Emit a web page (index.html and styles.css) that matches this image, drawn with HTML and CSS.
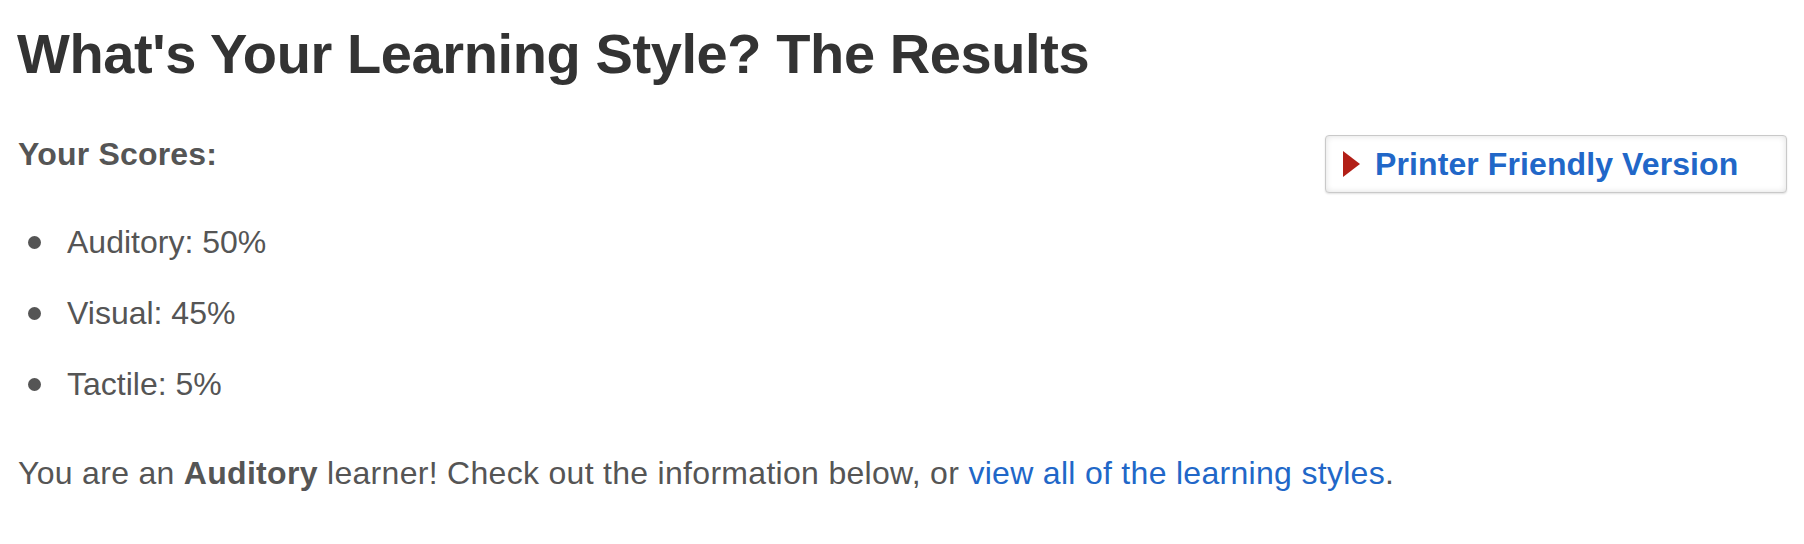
FILE: index.html
```html
<!DOCTYPE html>
<html lang="en">
<head>
<meta charset="utf-8">
<title>What's Your Learning Style? The Results</title>
<link rel="stylesheet" href="styles.css">
</head>
<body>
<div class="page">
  <h1 class="title">What's Your Learning Style? The Results</h1>
  <div class="scores-row">
    <div class="scores">
      <h2 class="scores-heading">Your Scores:</h2>
      <ul class="score-list">
        <li>Auditory: 50%</li>
        <li>Visual: 45%</li>
        <li>Tactile: 5%</li>
      </ul>
    </div>
    <a class="print-btn" href="#"><span class="print-arrow"></span>Printer Friendly Version</a>
  </div>
  <p class="result">You are an <strong>Auditory</strong> learner! Check out the information below, or <a class="link" href="#">view all of the learning styles</a>.</p>
</div>
</body>
</html>
```
FILE: styles.css
```css
html, body {
  margin: 0;
  padding: 0;
  background: #fff;
}
.page {
  padding: 22px 17px 0 18px;
  font-family: "Liberation Sans", Arial, Helvetica, sans-serif;
  color: #555;
  font-size: 32px;
  line-height: 37px;
}
.title {
  margin: 0 0 0 -1px;
  font-size: 56px;
  line-height: 64px;
  font-weight: bold;
  color: #333;
  letter-spacing: -0.4px;
}
.scores-row {
  margin-top: 50px;
  display: flex;
  justify-content: space-between;
  align-items: flex-start;
}
.scores-heading {
  margin: 0;
  font-size: 32px;
  line-height: 37px;
  font-weight: bold;
  color: #555;
  letter-spacing: 0.2px;
}
.score-list {
  margin: 51px 0 0 0;
  padding-left: 10px;
  list-style: none;
}
.score-list li {
  display: flex;
  align-items: center;
  margin-bottom: 34px;
}
.score-list li::before {
  content: "";
  flex: none;
  width: 13px;
  height: 13px;
  margin-right: 26px;
  border-radius: 50%;
  background: #555;
}
.score-list li:last-child {
  margin-bottom: 0;
}
.print-btn {
  display: flex;
  align-items: center;
  box-sizing: border-box;
  width: 462px;
  height: 58px;
  margin-top: -1px;
  padding: 0 0 0 17px;
  border: 1px solid #c9c9c9;
  border-radius: 4px;
  background: #fff;
  box-shadow: inset 0 0 6px rgba(0,0,0,0.13), 0 1px 2px rgba(0,0,0,0.12);
  color: #2167c8;
  font-weight: bold;
  text-decoration: none;
  white-space: nowrap;
  letter-spacing: 0.1px;
}
.print-arrow {
  width: 0;
  height: 0;
  margin-right: 15px;
  border-top: 13px solid transparent;
  border-bottom: 13px solid transparent;
  border-left: 17px solid #b21f17;
  filter: blur(0.4px);
}
.result {
  margin: 52px 0 0 0;
  letter-spacing: 0.3px;
}
.result strong {
  font-weight: bold;
}
.link {
  color: #2167c8;
  text-decoration: none;
}
```
